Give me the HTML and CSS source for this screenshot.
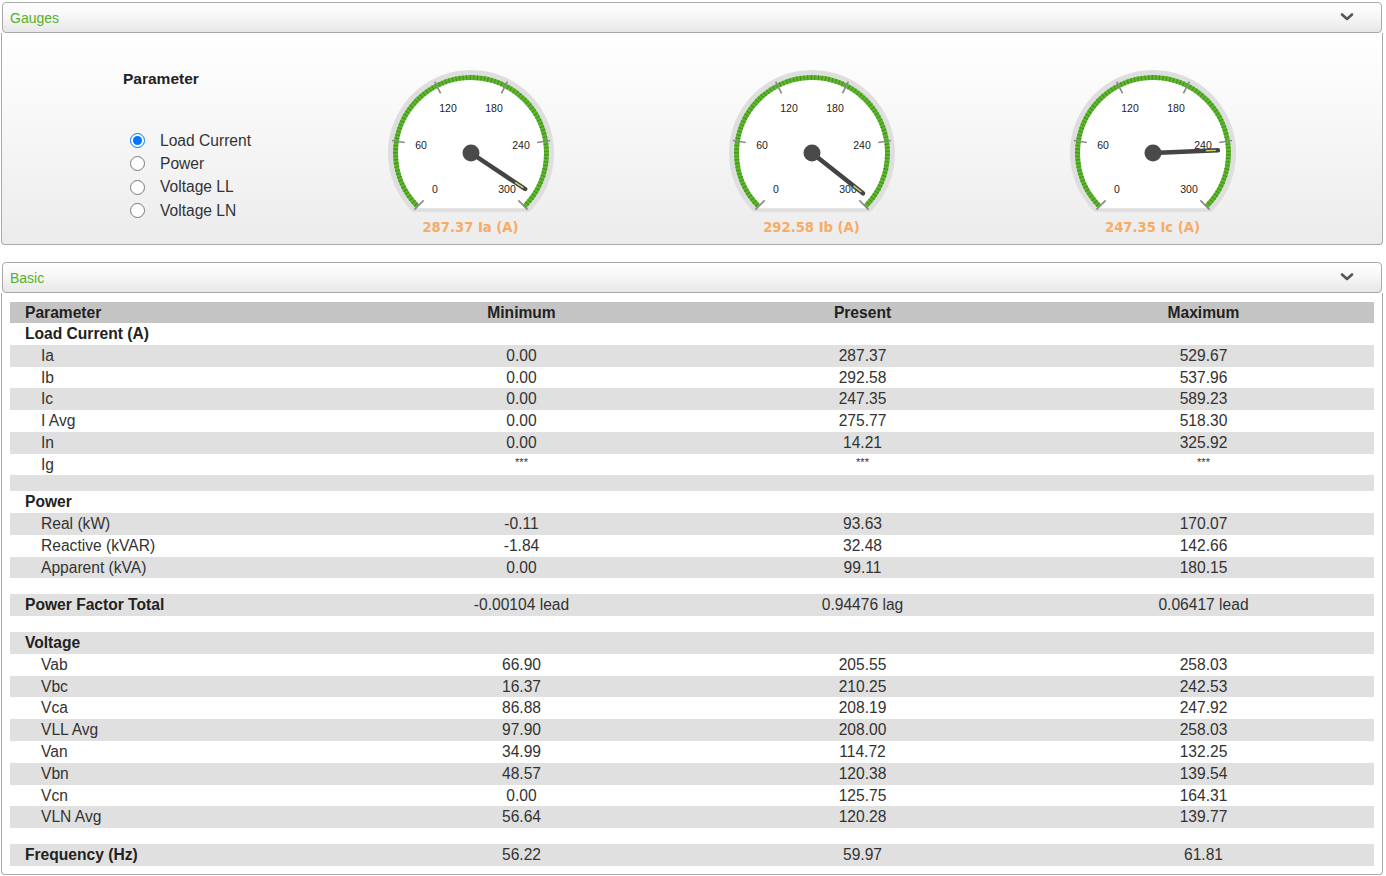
FILE: index.html
```html
<!DOCTYPE html>
<html>
<head>
<meta charset="utf-8">
<link rel="stylesheet" href="styles.css">
</head>
<body>
<div class="section">
  <div class="sec-head">
    <span class="sec-title">Gauges</span>
    <svg class="chev" width="14" height="10" viewBox="0 0 14 10"><path d="M2 2.5 L7 7 L12 2.5" fill="none" stroke="#555" stroke-width="2.6" stroke-linecap="round" stroke-linejoin="round"/></svg>
  </div>
  <div class="sec-body gauges-body">
    <div class="param-col">
      <div class="param-title">Parameter</div>
      <ul class="radio-list">
        <li><input type="radio" name="p" checked><span>Load Current</span></li>
        <li><input type="radio" name="p"><span>Power</span></li>
        <li><input type="radio" name="p"><span>Voltage LL</span></li>
        <li><input type="radio" name="p"><span>Voltage LN</span></li>
      </ul>
    </div>

    <div class="gauge">
      <svg width="180" height="150" viewBox="0 0 180 150">
        <path d="M148.7 141.7 A83 83 0 1 0 31.3 141.7 Z" fill="#dedede"/>
        <path d="M145.2 138.2 A78 78 0 1 0 34.8 138.2 Z" fill="#fff"/>
        <path d="M143.4 136.4 A75.5 75.5 0 1 0 36.6 136.4" fill="none" stroke="#5cb52c" stroke-width="5"/>
        <path d="M143.4 136.4 A75.5 75.5 0 1 0 36.6 136.4" fill="none" stroke="#3e8f1c" stroke-width="5" stroke-dasharray="0.9 2.657"/>
        <g stroke="#8c8c8c" stroke-width="1.7">
          <line x1="90" y1="16" x2="90" y2="3" transform="rotate(-135 90 83)"/>
          <line x1="90" y1="16" x2="90" y2="3" transform="rotate(-81 90 83)"/>
          <line x1="90" y1="16" x2="90" y2="3" transform="rotate(-27 90 83)"/>
          <line x1="90" y1="16" x2="90" y2="3" transform="rotate(27 90 83)"/>
          <line x1="90" y1="16" x2="90" y2="3" transform="rotate(81 90 83)"/>
          <line x1="90" y1="16" x2="90" y2="3" transform="rotate(135 90 83)"/>
        </g>
        <g class="ticklbl" text-anchor="middle">
          <text x="54" y="123">0</text>
          <text x="40" y="79">60</text>
          <text x="67" y="41.5">120</text>
          <text x="113" y="41.5">180</text>
          <text x="140" y="79">240</text>
          <text x="126" y="123">300</text>
        </g>
        <g transform="rotate(123.63 90 83)">
          <line x1="90" y1="83" x2="90" y2="18" stroke="#444" stroke-width="4.5" stroke-linecap="round"/>
          <line x1="90" y1="30" x2="90" y2="20" stroke="#c9d66a" stroke-width="1.4"/>
        </g>
        <circle cx="90" cy="83" r="8.5" fill="#4a4a4a"/>
      </svg>
      <div class="gauge-cap">287.37 Ia (A)</div>
    </div>

    <div class="gauge">
      <svg width="180" height="150" viewBox="0 0 180 150">
        <path d="M148.7 141.7 A83 83 0 1 0 31.3 141.7 Z" fill="#dedede"/>
        <path d="M145.2 138.2 A78 78 0 1 0 34.8 138.2 Z" fill="#fff"/>
        <path d="M143.4 136.4 A75.5 75.5 0 1 0 36.6 136.4" fill="none" stroke="#5cb52c" stroke-width="5"/>
        <path d="M143.4 136.4 A75.5 75.5 0 1 0 36.6 136.4" fill="none" stroke="#3e8f1c" stroke-width="5" stroke-dasharray="0.9 2.657"/>
        <g stroke="#8c8c8c" stroke-width="1.7">
          <line x1="90" y1="16" x2="90" y2="3" transform="rotate(-135 90 83)"/>
          <line x1="90" y1="16" x2="90" y2="3" transform="rotate(-81 90 83)"/>
          <line x1="90" y1="16" x2="90" y2="3" transform="rotate(-27 90 83)"/>
          <line x1="90" y1="16" x2="90" y2="3" transform="rotate(27 90 83)"/>
          <line x1="90" y1="16" x2="90" y2="3" transform="rotate(81 90 83)"/>
          <line x1="90" y1="16" x2="90" y2="3" transform="rotate(135 90 83)"/>
        </g>
        <g class="ticklbl" text-anchor="middle">
          <text x="54" y="123">0</text>
          <text x="40" y="79">60</text>
          <text x="67" y="41.5">120</text>
          <text x="113" y="41.5">180</text>
          <text x="140" y="79">240</text>
          <text x="126" y="123">300</text>
        </g>
        <g transform="rotate(128.32 90 83)">
          <line x1="90" y1="83" x2="90" y2="18" stroke="#444" stroke-width="4.5" stroke-linecap="round"/>
          <line x1="90" y1="30" x2="90" y2="20" stroke="#c9d66a" stroke-width="1.4"/>
        </g>
        <circle cx="90" cy="83" r="8.5" fill="#4a4a4a"/>
      </svg>
      <div class="gauge-cap">292.58 Ib (A)</div>
    </div>

    <div class="gauge">
      <svg width="180" height="150" viewBox="0 0 180 150">
        <path d="M148.7 141.7 A83 83 0 1 0 31.3 141.7 Z" fill="#dedede"/>
        <path d="M145.2 138.2 A78 78 0 1 0 34.8 138.2 Z" fill="#fff"/>
        <path d="M143.4 136.4 A75.5 75.5 0 1 0 36.6 136.4" fill="none" stroke="#5cb52c" stroke-width="5"/>
        <path d="M143.4 136.4 A75.5 75.5 0 1 0 36.6 136.4" fill="none" stroke="#3e8f1c" stroke-width="5" stroke-dasharray="0.9 2.657"/>
        <g stroke="#8c8c8c" stroke-width="1.7">
          <line x1="90" y1="16" x2="90" y2="3" transform="rotate(-135 90 83)"/>
          <line x1="90" y1="16" x2="90" y2="3" transform="rotate(-81 90 83)"/>
          <line x1="90" y1="16" x2="90" y2="3" transform="rotate(-27 90 83)"/>
          <line x1="90" y1="16" x2="90" y2="3" transform="rotate(27 90 83)"/>
          <line x1="90" y1="16" x2="90" y2="3" transform="rotate(81 90 83)"/>
          <line x1="90" y1="16" x2="90" y2="3" transform="rotate(135 90 83)"/>
        </g>
        <g class="ticklbl" text-anchor="middle">
          <text x="54" y="123">0</text>
          <text x="40" y="79">60</text>
          <text x="67" y="41.5">120</text>
          <text x="113" y="41.5">180</text>
          <text x="140" y="79">240</text>
          <text x="126" y="123">300</text>
        </g>
        <g transform="rotate(87.62 90 83)">
          <line x1="90" y1="83" x2="90" y2="18" stroke="#444" stroke-width="4.5" stroke-linecap="round"/>
          <line x1="90" y1="30" x2="90" y2="20" stroke="#c9d66a" stroke-width="1.4"/>
        </g>
        <circle cx="90" cy="83" r="8.5" fill="#4a4a4a"/>
      </svg>
      <div class="gauge-cap">247.35 Ic (A)</div>
    </div>
  </div>
</div>

<div class="section section-basic">
  <div class="sec-head">
    <span class="sec-title">Basic</span>
    <svg class="chev" width="14" height="10" viewBox="0 0 14 10"><path d="M2 2.5 L7 7 L12 2.5" fill="none" stroke="#555" stroke-width="2.6" stroke-linecap="round" stroke-linejoin="round"/></svg>
  </div>
  <div class="sec-body table-body">
    <table class="data">
      <thead>
        <tr><th class="lbl">Parameter</th><th>Minimum</th><th>Present</th><th>Maximum</th></tr>
      </thead>
      <tbody>
        <tr class="grp"><td class="lbl">Load Current (A)</td><td></td><td></td><td></td></tr>
        <tr><td class="sub">Ia</td><td>0.00</td><td>287.37</td><td>529.67</td></tr>
        <tr><td class="sub">Ib</td><td>0.00</td><td>292.58</td><td>537.96</td></tr>
        <tr><td class="sub">Ic</td><td>0.00</td><td>247.35</td><td>589.23</td></tr>
        <tr><td class="sub">I Avg</td><td>0.00</td><td>275.77</td><td>518.30</td></tr>
        <tr><td class="sub">In</td><td>0.00</td><td>14.21</td><td>325.92</td></tr>
        <tr><td class="sub">Ig</td><td class="na">***</td><td class="na">***</td><td class="na">***</td></tr>
        <tr class="gap"><td></td><td></td><td></td><td></td></tr>
        <tr class="grp"><td class="lbl">Power</td><td></td><td></td><td></td></tr>
        <tr><td class="sub">Real (kW)</td><td>-0.11</td><td>93.63</td><td>170.07</td></tr>
        <tr><td class="sub">Reactive (kVAR)</td><td>-1.84</td><td>32.48</td><td>142.66</td></tr>
        <tr><td class="sub">Apparent (kVA)</td><td>0.00</td><td>99.11</td><td>180.15</td></tr>
        <tr class="gap"><td></td><td></td><td></td><td></td></tr>
        <tr class="grp"><td class="lbl">Power Factor Total</td><td>-0.00104 lead</td><td>0.94476 lag</td><td>0.06417 lead</td></tr>
        <tr class="gap"><td></td><td></td><td></td><td></td></tr>
        <tr class="grp"><td class="lbl">Voltage</td><td></td><td></td><td></td></tr>
        <tr><td class="sub">Vab</td><td>66.90</td><td>205.55</td><td>258.03</td></tr>
        <tr><td class="sub">Vbc</td><td>16.37</td><td>210.25</td><td>242.53</td></tr>
        <tr><td class="sub">Vca</td><td>86.88</td><td>208.19</td><td>247.92</td></tr>
        <tr><td class="sub">VLL Avg</td><td>97.90</td><td>208.00</td><td>258.03</td></tr>
        <tr><td class="sub">Van</td><td>34.99</td><td>114.72</td><td>132.25</td></tr>
        <tr><td class="sub">Vbn</td><td>48.57</td><td>120.38</td><td>139.54</td></tr>
        <tr><td class="sub">Vcn</td><td>0.00</td><td>125.75</td><td>164.31</td></tr>
        <tr><td class="sub">VLN Avg</td><td>56.64</td><td>120.28</td><td>139.77</td></tr>
        <tr class="gap"><td></td><td></td><td></td><td></td></tr>
        <tr class="grp"><td class="lbl">Frequency (Hz)</td><td>56.22</td><td>59.97</td><td>61.81</td></tr>
      </tbody>
    </table>
  </div>
</div>
</body>
</html>
```

FILE: styles.css
```css
* { box-sizing: border-box; }

body {
  margin: 0;
  padding: 2px 3px 0 1px;
  font-family: "Liberation Sans", Arial, sans-serif;
  color: #333;
  background: #fff;
}

.sec-head {
  margin: 0 1px;
  height: 31px;
  border: 1px solid #a9a9a9;
  border-radius: 4px;
  background: linear-gradient(#ffffff 0%, #f7f7f7 45%, #e7e7e7 100%);
  display: flex;
  align-items: center;
  justify-content: space-between;
  padding: 0 27px 0 7px;
}

.sec-title {
  color: #57b02b;
  font-size: 14px;
  line-height: 16px;
  padding-top: 1px;
}

.chev { display: block; margin-top: -1px; }

.sec-body {
  border: 1px solid #aaa;
  border-top: none;
  border-radius: 0 0 4px 4px;
}

.gauges-body {
  height: 212px;
  padding: 37px 0 0 0;
  background: linear-gradient(#ffffff 0%, #f6f6f6 50%, #ececec 100%);
  display: grid;
  grid-template-columns: 298px 341px 341px 341px;
  align-items: start;
}

.param-col { padding-left: 121px; }

.param-title {
  font-weight: bold;
  font-size: 15.5px;
  line-height: 18px;
  color: #222;
}

.radio-list {
  list-style: none;
  margin: 41px 0 0 0;
  padding: 0;
}

.radio-list li {
  display: flex;
  align-items: center;
  height: 23.3px;
  font-size: 15.6px;
  color: #333;
}

.radio-list input {
  width: 15px;
  height: 15px;
  margin: 0 15px 0 7px;
}

.gauge {
  display: flex;
  flex-direction: column;
  align-items: center;
}

.gauge svg { display: block; }

.ticklbl text {
  font-family: "Liberation Sans", Arial, sans-serif;
  font-size: 10.5px;
  fill: #222;
}

.gauge-cap {
  font-family: "DejaVu Sans", Verdana, sans-serif;
  font-size: 13.2px;
  font-weight: bold;
  line-height: 16px;
  color: #f8ab65;
}

.section-basic { margin-top: 17px; }

.table-body {
  padding: 9px 8px 8px 8px;
  background: #fff;
}

.data {
  width: 100%;
  border-collapse: collapse;
  table-layout: fixed;
  font-size: 15.6px;
}

.data th {
  height: 21px;
  padding: 0;
  background: #c4c4c4;
  color: #222;
  font-weight: bold;
  text-align: center;
  line-height: 21px;
}

.data th.lbl { text-align: left; padding-left: 15px; }

.data td {
  height: 21.76px;
  padding: 0;
  line-height: 21.76px;
  text-align: center;
  color: #333;
  white-space: nowrap;
}

.data tbody tr:nth-child(even) { background: #e0e0e0; }

.data td.lbl {
  text-align: left;
  padding-left: 15px;
  font-weight: bold;
  color: #222;
}

.data td.sub {
  text-align: left;
  padding-left: 31px;
}

.data td.na {
  font-size: 11px;
  line-height: 13px;
  vertical-align: top;
  padding-top: 2px;
}

.data tr.gap td {
  height: 16px;
  line-height: 16px;
}
```
